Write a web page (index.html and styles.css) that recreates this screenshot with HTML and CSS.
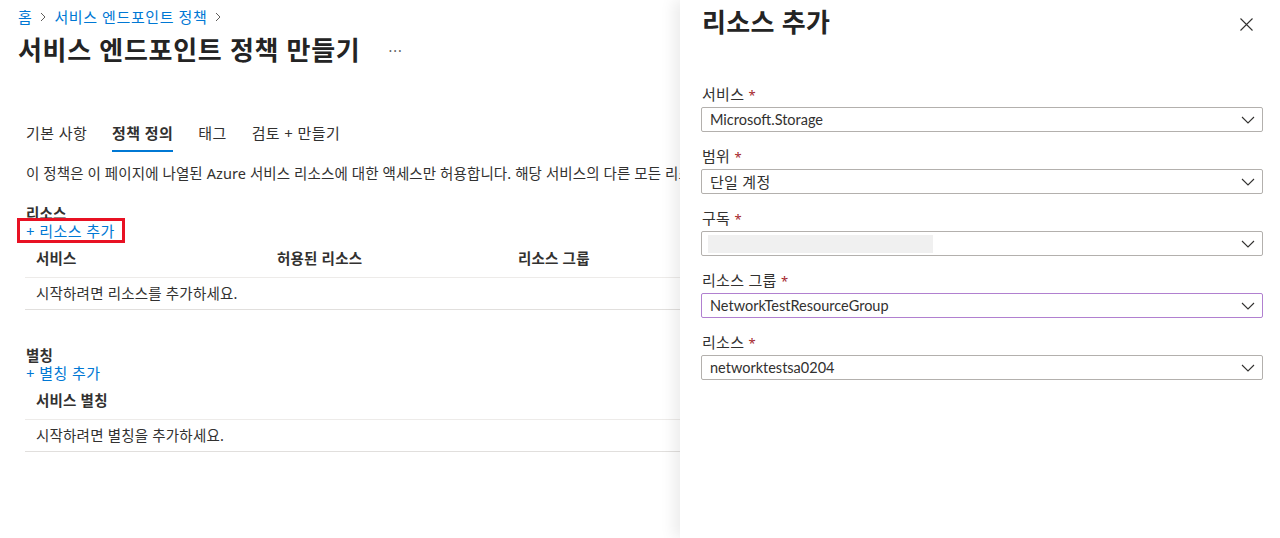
FILE: index.html
```html
<!DOCTYPE html>
<html lang="ko">
<head>
<meta charset="utf-8">
<title>서비스 엔드포인트 정책 만들기</title>
<link rel="stylesheet" href="styles.css">
</head>
<body>
<div class="page">
  <nav class="crumbs">
    <a class="crumb">홈</a>
    <svg class="sep" width="8" height="10" viewBox="0 0 8 10"><path d="M2 1l4 4-4 4" fill="none" stroke="#605e5c" stroke-width="1"/></svg>
    <a class="crumb">서비스 엔드포인트 정책</a>
    <svg class="sep" width="8" height="10" viewBox="0 0 8 10"><path d="M2 1l4 4-4 4" fill="none" stroke="#605e5c" stroke-width="1"/></svg>
  </nav>
  <div class="title-row">
    <h1 class="title">서비스 엔드포인트 정책 만들기</h1>
    <span class="more">···</span>
  </div>

  <div class="content">
    <div class="tabs">
      <span class="tab">기본 사항</span>
      <span class="tab active">정책 정의</span>
      <span class="tab">태그</span>
      <span class="tab">검토 + 만들기</span>
    </div>
    <p class="desc">이 정책은 이 페이지에 나열된 Azure 서비스 리소스에 대한 액세스만 허용합니다. 해당 서비스의 다른 모든 리소스에 대한 액세스는 거부됩니다.</p>

    <h2 class="section">리소스</h2>
    <a class="add"><span class="callout"></span>+ 리소스 추가</a>
    <div class="table">
      <div class="thead">
        <span class="col">서비스</span>
        <span class="col">허용된 리소스</span>
        <span class="col">리소스 그룹</span>
      </div>
      <div class="trow">시작하려면 리소스를 추가하세요.</div>
    </div>

    <h2 class="section alias">별칭</h2>
    <a class="add">+ 별칭 추가</a>
    <div class="table">
      <div class="thead"><span class="col">서비스 별칭</span></div>
      <div class="trow">시작하려면 별칭을 추가하세요.</div>
    </div>
  </div>
</div>

<aside class="panel">
  <div class="panel-head">
    <h2 class="panel-title">리소스 추가</h2>
    <svg class="close" width="13" height="13" viewBox="0 0 13 13"><path d="M0.5 0.5l12 12M12.5 0.5l-12 12" stroke="#323130" stroke-width="1.1" fill="none"/></svg>
  </div>
  <div class="form">
    <div class="field">
      <label class="label">서비스 <span class="req">*</span></label>
      <div class="select"><span class="value">Microsoft.Storage</span><svg class="chev" width="14" height="8" viewBox="0 0 14 8"><path d="M1 1l6 6 6-6" fill="none" stroke="#323130" stroke-width="1.1"/></svg></div>
    </div>
    <div class="field">
      <label class="label">범위 <span class="req">*</span></label>
      <div class="select"><span class="value ko">단일 계정</span><svg class="chev" width="14" height="8" viewBox="0 0 14 8"><path d="M1 1l6 6 6-6" fill="none" stroke="#323130" stroke-width="1.1"/></svg></div>
    </div>
    <div class="field">
      <label class="label">구독 <span class="req">*</span></label>
      <div class="select"><span class="redacted"></span><svg class="chev" width="14" height="8" viewBox="0 0 14 8"><path d="M1 1l6 6 6-6" fill="none" stroke="#323130" stroke-width="1.1"/></svg></div>
    </div>
    <div class="field">
      <label class="label">리소스 그룹 <span class="req">*</span></label>
      <div class="select focus"><span class="value">NetworkTestResourceGroup</span><svg class="chev" width="14" height="8" viewBox="0 0 14 8"><path d="M1 1l6 6 6-6" fill="none" stroke="#323130" stroke-width="1.1"/></svg></div>
    </div>
    <div class="field">
      <label class="label">리소스 <span class="req">*</span></label>
      <div class="select"><span class="value">networktestsa0204</span><svg class="chev" width="14" height="8" viewBox="0 0 14 8"><path d="M1 1l6 6 6-6" fill="none" stroke="#323130" stroke-width="1.1"/></svg></div>
    </div>
  </div>
</aside>
</body>
</html>
```

FILE: styles.css
```css
* { box-sizing: border-box; }
html, body { margin: 0; padding: 0; background: #fff; }
body {
  font-family: "Segoe UI", "Noto Sans", "Noto Sans CJK KR", sans-serif;
  font-size: 14.5px;
  letter-spacing: 0.2px;
  color: #323130;
  width: 1280px;
  height: 538px;
  overflow: hidden;
}
.page { padding: 7px 0 0 18px; }
.crumbs { display: flex; align-items: center; gap: 7px; height: 20px; line-height: 20px; font-size: 15px; letter-spacing: 0.6px; }
.crumb { color: #0078d4; }
.title-row { display: flex; align-items: center; margin-top: 7px; height: 32px; }
.title { margin: 0; font-size: 26px; line-height: 32px; font-weight: 700; color: #242424; letter-spacing: 0.7px; }
.more { margin-left: 28px; color: #605e5c; font-size: 14px; letter-spacing: 1px; }

.content { padding-left: 8px; width: 662px; }
.tabs { display: flex; gap: 25px; margin-top: 57px; }
.tab { line-height: 20px; padding-bottom: 7px; border-bottom: 2px solid transparent; font-size: 15px; letter-spacing: 0.4px; color: #323130; }
.tab.active { font-weight: 700; border-bottom-color: #0078d4; }
.desc { margin: 11px 0 0; width: 654px; overflow: hidden; line-height: 20px; white-space: nowrap; font-size: 14.5px; letter-spacing: 0.1px; }

.section { margin: 21px 0 0; font-size: 14.5px; font-weight: 700; line-height: 18px; height: 18px; }
.section.alias { margin-top: 36px; }
.add { position: relative; display: block; width: fit-content; height: 18px; color: #0078d4; line-height: 18px; font-size: 15px; letter-spacing: 0.4px; }
.callout {
  position: absolute; left: -9px; top: -4px; width: 108px; height: 25px;
  border: 3px solid #e81123;
}
.table { margin-left: -1px; width: 655px; overflow: hidden; }
.thead { display: flex; height: 38px; align-items: center; border-bottom: 1px solid #edebe9; font-weight: 700; padding-bottom: 3px; }
.col { flex: 0 0 241px; padding-left: 11px; }
.trow { height: 32px; line-height: 30px; padding-left: 11px; border-bottom: 1px solid #e1dfdd; }

.panel {
  position: absolute; top: 0; right: 0; width: 600px; height: 538px;
  background: #fff; box-shadow: -6px 0 14px rgba(0,0,0,0.08);
  padding: 6px 17px 0 21px;
}
.panel-head { display: flex; justify-content: space-between; align-items: center; height: 32px; }
.panel-title { margin: 0 0 0 1px; font-size: 26px; line-height: 32px; font-weight: 700; color: #242424; letter-spacing: 0.3px; }
.close { margin-right: 10px; margin-top: 4px; }
.form { margin-top: 46px; }
.field { margin-bottom: 14px; }
.label { display: block; height: 20px; line-height: 20px; margin: 0 0 3px 1px; font-size: 15px; letter-spacing: 0.3px; }
.req { color: #a4262c; font-size: 13px; line-height: 1; }
.select {
  display: flex; align-items: center; justify-content: space-between;
  height: 25px; border: 1px solid #b3b0ad; border-radius: 2px; padding: 0 7px 0 8px;
}
.select.focus { border-color: #b180d0; }
.value { font-family: "Lato", "Noto Sans CJK KR", sans-serif; font-size: 14.5px; line-height: 20px; letter-spacing: 0; }
.value.ko { font-size: 15px; letter-spacing: 0.3px; }
.redacted { display: block; width: 225px; height: 18px; background: #f0f0f0; margin-left: -2px; }
.chev { margin-right: 0; }
```
